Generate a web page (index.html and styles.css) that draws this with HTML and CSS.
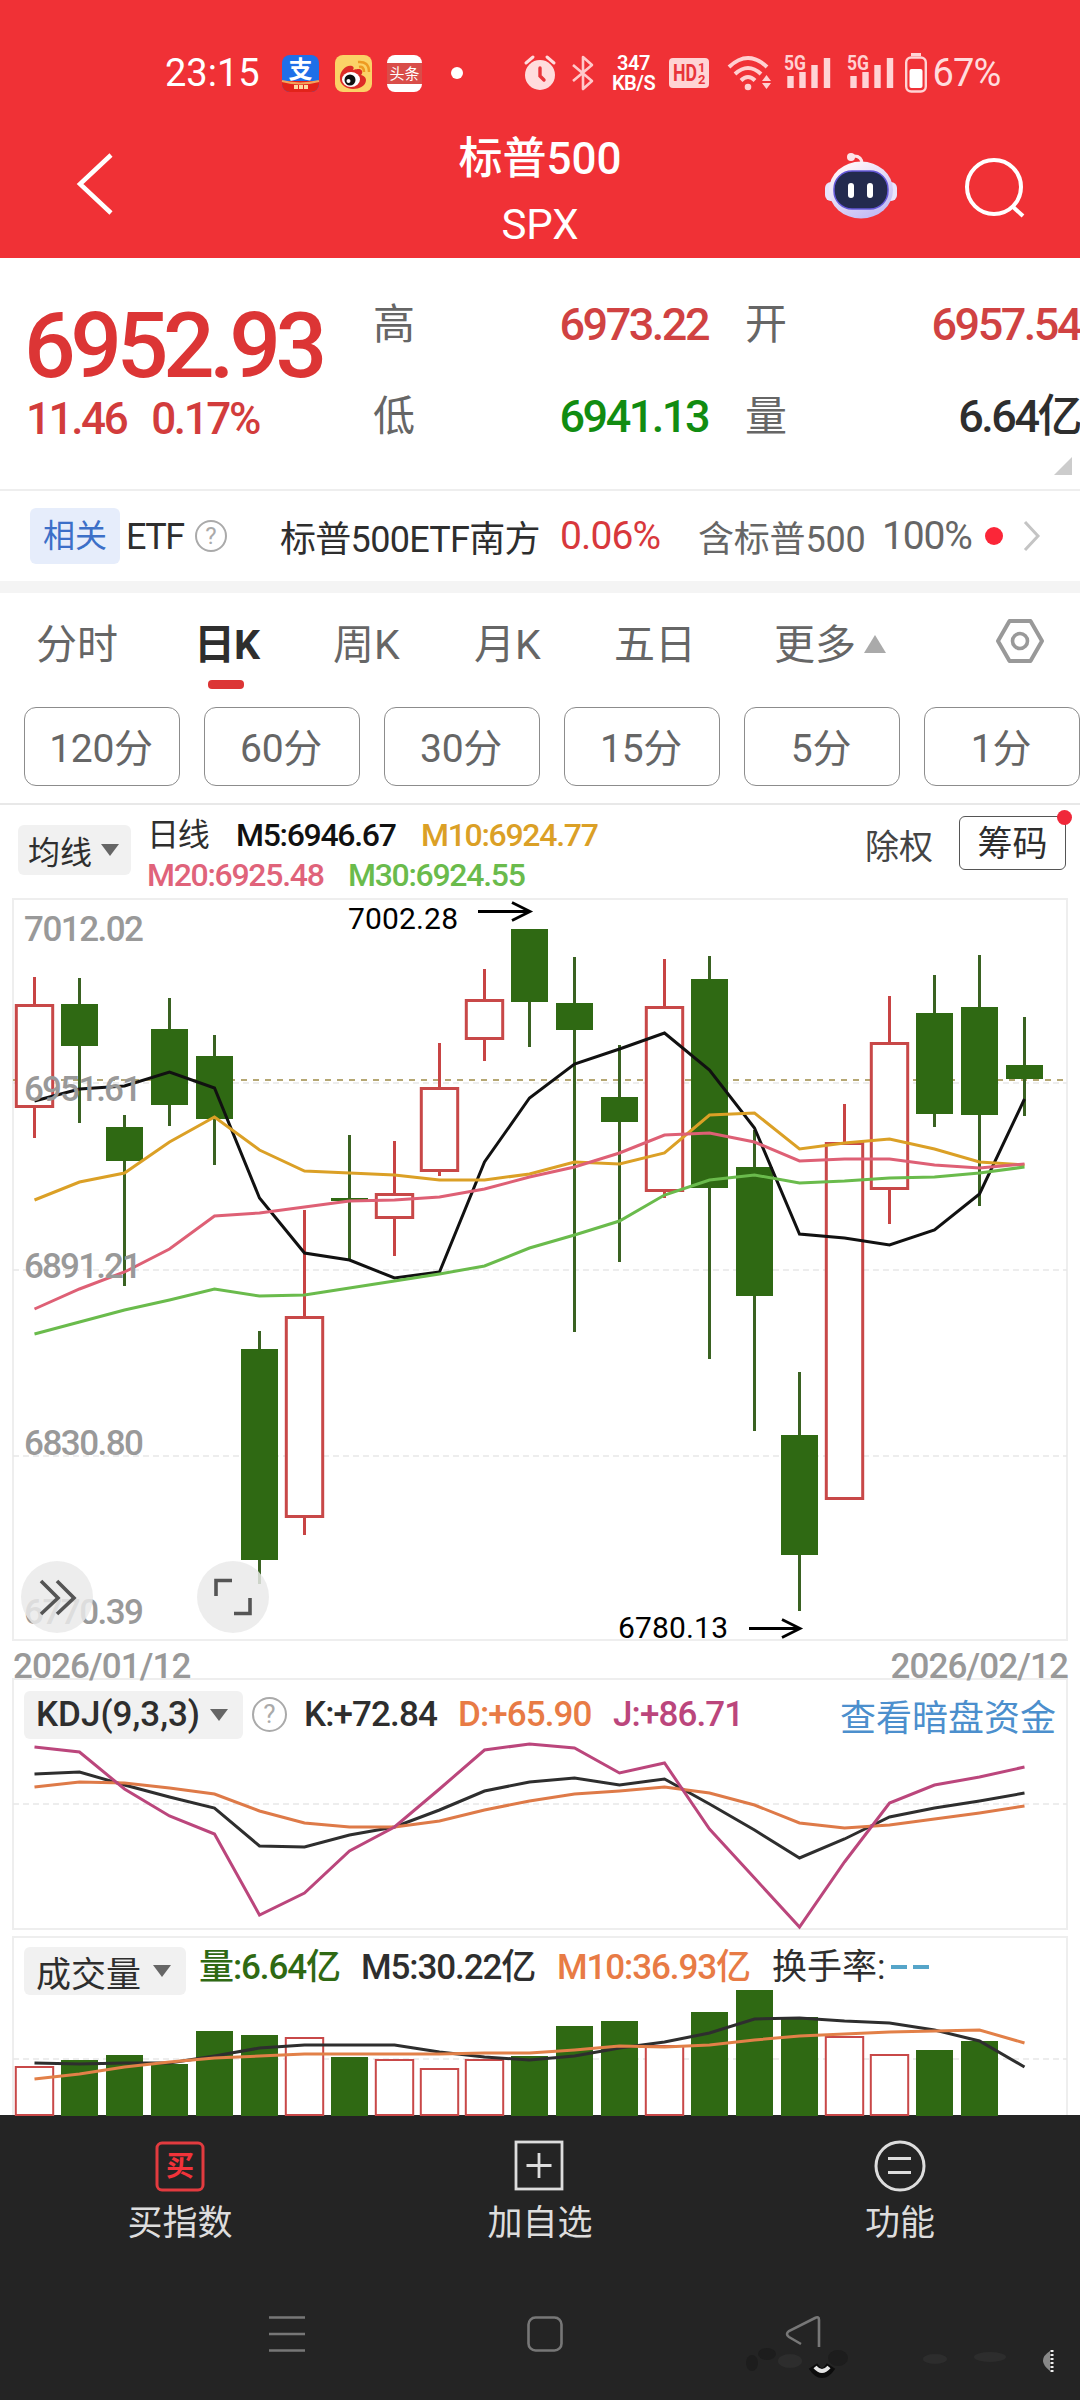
FILE: index.html
```html
<!DOCTYPE html>
<html lang="zh-CN">
<head>
  <meta charset="UTF-8">
  <meta name="viewport" content="width=device-width, initial-scale=1.0">
  <title>标普500 SPX</title>
  <link rel="stylesheet" href="styles.css">
</head>
<body>
  <header class="top">
    <!-- BARRA DE ESTADO -->
    <div class="status">
      <span class="clock">23:15</span>
      <svg class="app-icon" width="37" height="37" viewBox="0 0 37 37">
        <rect width="37" height="37" rx="8" fill="#1f6fe8"/>
        <path d="M0 26h37v3a8 8 0 0 1-8 8H8a8 8 0 0 1-8-8z" fill="#e2231a"/>
        <path d="M0 26q18 5 37 0" stroke="#f3a35c" stroke-width="2" fill="none"/>
        <text x="18.5" y="23" class="cn" font-size="24" font-weight="700" fill="#fff" text-anchor="middle">支</text>
        <path d="M12 32h14" stroke="#ffd9a0" stroke-width="4" stroke-dasharray="4 1"/>
      </svg>
      <svg class="app-icon" width="37" height="37" viewBox="0 0 37 37">
        <rect width="37" height="37" rx="8" fill="#fbd267"/>
        <path d="M5 24C4 16 12 9 17 11c3 1 1 4 1 4s8-3 9 1c1 2-1 4-1 4s5 1 5 5c0 6-7 9-13 9S5 30 5 24z" fill="#dd2b27"/>
        <ellipse cx="16" cy="24.500" rx="9" ry="7.500" fill="#fff"/>
        <circle cx="15" cy="25" r="5.500" fill="#111"/>
        <circle cx="13.500" cy="26" r="2" fill="#fff"/>
        <path d="M24 12q5-1 5 5M23 7q11-1 11 10" stroke="#ee9a22" stroke-width="2.500" fill="none"/>
      </svg>
      <svg class="app-icon" width="35" height="37" viewBox="0 0 35 37">
        <rect width="35" height="37" rx="8" fill="#fff"/>
        <rect y="8" width="35" height="21" fill="#d94d49"/>
        <text x="17.500" y="24" class="cn" font-size="15" fill="#fff" text-anchor="middle">头条</text>
      </svg>
      <i class="dot"></i>
      <svg class="alarm" width="32" height="36" viewBox="0 0 32 36">
        <circle cx="16" cy="20" r="15" fill="#ffdcdd"/>
        <path d="M2 8l7-6M30 8l-7-6" stroke="#ffdcdd" stroke-width="3" stroke-linecap="round"/>
        <path d="M16 13v8l4 4" stroke="#e8343a" stroke-width="3.400" fill="none" stroke-linecap="round"/>
      </svg>
      <svg class="bt" width="22" height="36" viewBox="0 0 22 36">
        <path d="M1 10l19 16-9 8V2l9 8L1 26" stroke="#ffc9ca" stroke-width="2.600" fill="none" stroke-linejoin="round"/>
      </svg>
      <span class="speed">347<br>KB/S</span>
      <svg class="hd" width="40" height="30" viewBox="0 0 40 30">
        <rect width="40" height="30" rx="4" fill="#ffd4d5"/>
        <g fill="#e8343a" font-weight="700">
          <text x="4" y="23" font-size="23" textLength="24" lengthAdjust="spacingAndGlyphs">HD</text>
          <text x="29" y="14" font-size="13">1</text>
          <text x="29" y="26" font-size="13">2</text>
        </g>
      </svg>
      <svg class="wifi" width="44" height="36" viewBox="0 0 44 36">
        <g fill="none" stroke="#ffd0d1" stroke-width="4">
          <path d="M1 12Q20-6 39 12"/>
          <path d="M7 19q13-12 26 0"/>
          <path d="M13 25.500q7-7 14 0"/>
        </g>
        <circle cx="20" cy="32" r="3.300" fill="#ffd0d1"/>
        <path d="M34 26l4.500-6 4.500 6zM34 28l4.500 6 4.500-6z" fill="#ffd0d1"/>
      </svg>
      <svg class="signal" width="47" height="36" viewBox="0 0 47 36">
        <text x="0" y="14.500" font-size="20" font-weight="700" fill="#ffd0d1" textLength="22" lengthAdjust="spacingAndGlyphs">5G</text>
        <path d="M6.500 33V21M18.500 33V17M30.500 33V10M43 33V3" stroke="#ffd4d5" stroke-width="6.400"/>
      </svg>
      <svg class="signal second" width="47" height="36" viewBox="0 0 47 36">
        <text x="0" y="14.500" font-size="20" font-weight="700" fill="#ffd0d1" textLength="22" lengthAdjust="spacingAndGlyphs">5G</text>
        <path d="M6.500 33V21M18.500 33V17M30.500 33V10M43 33V3" stroke="#ffd4d5" stroke-width="6.400"/>
      </svg>
      <svg class="battery" width="22" height="40" viewBox="0 0 22 40">
        <rect x="6" y="0" width="10" height="3" fill="#ffd4d5"/>
        <rect x="1.200" y="4.500" width="19.600" height="34" rx="5" fill="none" stroke="#ffd4d5" stroke-width="2.400"/>
        <rect x="4.500" y="16" width="13" height="19" rx="2" fill="#fff"/>
      </svg>
      <span class="percent">67%</span>
    </div>

    <!-- TÍTULO -->
    <div class="titlebar">
      <svg class="back" width="40" height="64" viewBox="0 0 40 64">
        <path d="M36 3L5 32l31 29" stroke="#fff" stroke-width="4.500" fill="none"/>
      </svg>
      <div class="title">
        <h1>标普500</h1>
        <p>SPX</p>
      </div>
      <svg class="robot" width="72" height="68" viewBox="0 0 72 68">
        <defs>
          <linearGradient id="shell" x1="0" y1="0" x2="0.6" y2="1">
            <stop offset="0.2" stop-color="#fdf3f8"/>
            <stop offset="1" stop-color="#c3bdf5"/>
          </linearGradient>
        </defs>
        <path d="M37 13q0-8-8-8" stroke="#fde4e8" stroke-width="3" fill="none"/>
        <circle cx="26" cy="6" r="4" fill="#fde4e8"/>
        <rect x="0" y="31" width="72" height="19" rx="6" fill="#e8e4fc"/>
        <ellipse cx="36" cy="39" rx="32" ry="28.500" fill="url(#shell)"/>
        <rect x="9" y="20" width="54" height="38" rx="18" fill="#232a4e" stroke="#6458d8" stroke-width="1.500"/>
        <rect x="23" y="32" width="6" height="15" rx="3" fill="#fff"/>
        <rect x="42" y="32" width="6" height="15" rx="3" fill="#fff"/>
      </svg>
      <svg class="search" width="62" height="62" viewBox="0 0 62 62">
        <circle cx="30" cy="30" r="27" stroke="#fff" stroke-width="4" fill="none"/>
        <path d="M48 49l11 10" stroke="#fff" stroke-width="4"/>
      </svg>
    </div>
  </header>

  <!-- COTIZACIÓN -->
  <section class="quote">
    <div class="price">
      <strong>6952.93</strong>
      <p><span>11.46</span><span>0.17%</span></p>
    </div>
    <dl class="stats">
      <dt>高</dt><dd class="up">6973.22</dd>
      <dt>开</dt><dd class="up">6957.54</dd>
      <dt>低</dt><dd class="down">6941.13</dd>
      <dt>量</dt><dd>6.64亿</dd>
    </dl>
    <i class="corner"></i>
  </section>

  <!-- ETF RELACIONADO -->
  <section class="etf">
    <span class="tag">相关</span>
    <span class="etf-word">ETF</span>
    <span class="help">?</span>
    <span class="etf-name">标普500ETF南方</span>
    <span class="etf-change">0.06%</span>
    <span class="etf-holds">含标普500</span>
    <span class="etf-share">100%</span>
    <i class="live"></i>
    <svg class="more" width="18" height="32" viewBox="0 0 18 32">
      <path d="M2 2l13 14L2 30" stroke="#c4c4c4" stroke-width="3" fill="none"/>
    </svg>
  </section>

  <!-- PERIODOS -->
  <nav class="tabs">
    <a>分时</a>
    <a class="active">日K</a>
    <a>周K</a>
    <a>月K</a>
    <a>五日</a>
    <a>更多<i class="tri-up"></i></a>
    <svg class="gear" width="50" height="46" viewBox="0 0 50 46">
      <path d="M14.500 3h21L47 23 35.500 43h-21L3 23z" stroke="#999" stroke-width="4" fill="none" stroke-linejoin="round"/>
      <circle cx="25" cy="23" r="7.500" stroke="#999" stroke-width="3.600" fill="none"/>
    </svg>
  </nav>
  <div class="minutes">
    <button>120分</button>
    <button>60分</button>
    <button>30分</button>
    <button>15分</button>
    <button>5分</button>
    <button>1分</button>
  </div>

  <!-- MEDIAS MÓVILES -->
  <section class="legend">
    <span class="chip">均线<i class="tri-down"></i></span>
    <div class="averages">
      <p><b>日线</b><span class="m5">M5:6946.67</span><span class="m10">M10:6924.77</span></p>
      <p><span class="m20">M20:6925.48</span><span class="m30">M30:6924.55</span></p>
    </div>
    <span class="rights">除权</span>
    <span class="chips-button">筹码</span>
  </section>

  <section class="candles">
    <svg id="kline" width="1080" height="743" viewBox="0 898 1080 743">
      <rect x="13" y="899" width="1054" height="741" class="frame"/>
      <path d="M13 1083H1067M13 1270H1067M13 1456H1067" class="grid"/>
      <path d="M13 1080H1067" class="last-price"/>
      <g id="candle-layer"></g>
      <g id="ma-layer"></g>
      <g class="axis">
        <text x="24" y="941" textLength="120">7012.02</text>
        <text x="24" y="1101" textLength="118">6951.61</text>
        <text x="24" y="1278" textLength="118">6891.21</text>
        <text x="24" y="1455" textLength="120">6830.80</text>
        <text x="24" y="1624" textLength="120">6770.39</text>
      </g>
      <g class="extreme">
        <text x="348" y="929" textLength="110">7002.28</text>
        <path d="M478 911.500h51M512 902.500l18 9-18 9"/>
        <text x="618" y="1638" textLength="110">6780.13</text>
        <path d="M749 1628.500h50M782 1619.500l18 9-18 9"/>
      </g>
      <g class="round">
        <circle cx="57" cy="1597" r="36"/>
        <path d="M41 1581l17 17-17 16M57 1581l17 17-17 16"/>
        <circle cx="233" cy="1597" r="36"/>
        <path d="M216 1596v-15.500h16M234 1613.500h16V1598"/>
      </g>
    </svg>
  </section>

  <div class="dates"><span>2026/01/12</span><span>2026/02/12</span></div>

  <!-- KDJ -->
  <section class="panel kdj">
    <div class="panel-head">
      <span class="chip">KDJ(9,3,3)<i class="tri-down"></i></span>
      <span class="help">?</span>
      <span class="k">K:+72.84</span>
      <span class="d">D:+65.90</span>
      <span class="j">J:+86.71</span>
      <a class="dark-pool">查看暗盘资金</a>
    </div>
    <svg id="kdj" width="1080" height="190" viewBox="0 1740 1080 190">
      <path d="M13 1804H1067" class="grid"/>
    </svg>
  </section>

  <!-- VOLUMEN -->
  <section class="panel volume">
    <div class="panel-head">
      <span class="chip">成交量<i class="tri-down"></i></span>
      <span class="vol">量:6.64亿</span>
      <span class="v5">M5:30.22亿</span>
      <span class="v10">M10:36.93亿</span>
      <span class="turnover">换手率:</span>
      <i class="dashes"></i>
    </div>
    <svg id="volume" width="1080" height="127" viewBox="0 1988 1080 127">
      <path d="M13 2059H1067" class="grid"/>
    </svg>
  </section>

  <!-- BARRA INFERIOR -->
  <footer class="bottom">
    <div class="actions">
      <a>
        <svg width="52" height="52" viewBox="0 0 52 52">
          <rect x="3" y="3" width="46" height="47" rx="5" fill="none" stroke="#e23b3f" stroke-width="3"/>
          <text x="26" y="36" class="cn" font-size="28" font-weight="700" fill="#f2333a" text-anchor="middle">买</text>
        </svg>
        买指数
      </a>
      <a>
        <svg width="52" height="52" viewBox="0 0 52 52">
          <rect x="2" y="2" width="46" height="47" fill="none" stroke="#ddd" stroke-width="2.800"/>
          <path d="M25 13v25M12.500 25.500h25" stroke="#ddd" stroke-width="2.800"/>
        </svg>
        加自选
      </a>
      <a>
        <svg width="52" height="52" viewBox="0 0 52 52">
          <circle cx="26" cy="26" r="24" fill="none" stroke="#ddd" stroke-width="3"/>
          <path d="M14 18.500h23M14 32.500h23" stroke="#ddd" stroke-width="3"/>
        </svg>
        功能
      </a>
    </div>
    <svg class="system" width="1080" height="100" viewBox="0 2300 1080 100">
      <g fill="none" stroke="#777" stroke-width="2.600">
        <path d="M269 2317.500h36M269 2334h36M269 2350.500h36"/>
        <rect x="528.500" y="2317.500" width="33" height="33" rx="7"/>
        <path d="M819 2347v-27q0-4-4-2l-26 13q-4 3 0 6l12 7"/>
      </g>
      <g fill="#1d1d1d">
        <ellipse cx="767" cy="2354" rx="9" ry="6"/>
        <ellipse cx="752" cy="2363" rx="6" ry="8"/>
        <ellipse cx="838" cy="2358" rx="10" ry="8"/>
      </g>
      <g fill="#2d2d2d">
        <ellipse cx="790" cy="2361" rx="12" ry="7"/>
        <ellipse cx="935" cy="2359" rx="12" ry="5"/>
        <ellipse cx="990" cy="2357" rx="16" ry="5"/>
      </g>
      <path d="M813 2366q9 14 18 0" stroke="#0c0c0c" stroke-width="10" fill="none"/>
      <path d="M815 2367q7 8 14 0" stroke="#e4e4e4" stroke-width="4" fill="none"/>
      <path d="M1050 2351q-14 9 0 20z" fill="#888"/>
      <path d="M1052 2350v22" stroke="#eee" stroke-width="3" stroke-dasharray="2 2"/>
    </svg>
  </footer>
  <script src="script.js"></script>
</body>
</html>
```

FILE: styles.css
```css
body {
  margin: 0;
  width: 1080px;
  height: 2400px;
  overflow: hidden;
  background-color: #fff;
  color: #2e2e2e;
  font-family: Roboto, "Noto Sans CJK SC", sans-serif;
}

h1, p, dl, dd {
  margin: 0;
  font-weight: 400;
}

svg {
  display: block;
  flex: none;
  overflow: visible;
}

span, a, dd, dt, b {
  white-space: nowrap;
}

.cn {
  font-family: "Noto Sans CJK SC", sans-serif;
}

/* cabecera */
.top {
  height: 258px;
  background-color: #f03136;
  color: #fff;
}

.status {
  display: flex;
  align-items: center;
  height: 76px;
  padding: 35px 0 0 165px;
}

.clock {
  width: 117px;
  font-size: 38px;
}

.app-icon {
  margin-right: 15.5px;
}

.dot {
  width: 12px;
  height: 12px;
  margin-left: 13px;
  border-radius: 50%;
  background-color: #fff;
}

.alarm { margin-left: 61px; }
.bt { margin-left: 16px; }

.speed {
  width: 44px;
  margin-left: 18px;
  font-size: 20px;
  line-height: 20px;
  font-weight: 600;
  text-align: center;
  letter-spacing: -0.5px;
}

.hd { margin-left: 13px; }
.wifi { margin-left: 19px; }
.signal { margin-left: 12px; }
.signal.second { margin-left: 16px; }
.battery { margin-left: 11px; }

.percent {
  margin-left: 6px;
  font-size: 38px;
  color: #ffdcdd;
  letter-spacing: -0.8px;
}

.titlebar {
  display: flex;
  align-items: flex-start;
  height: 147px;
}

.back {
  margin: 41px 0 0 75px;
}

.title {
  width: 200px;
  margin-left: 325px;
  padding-top: 16px;
  text-align: center;
}

.title h1 {
  font-size: 44px;
  line-height: 65px;
  font-weight: 500;
}

.title p {
  font-size: 42px;
  line-height: 65px;
}

.robot { margin: 40px 0 0 185px; }
.search { margin: 46px 0 0 67px; }

/* cotización */
.quote {
  display: flex;
  position: relative;
  height: 231px;
  border-bottom: 2px solid #eee;
}

.price {
  width: 373px;
  padding: 38px 0 0 24px;
  box-sizing: border-box;
  color: #dc3535;
}

.price strong {
  display: block;
  font-size: 91px;
  line-height: 100px;
  font-weight: 500;
  letter-spacing: -5.4px;
}

.price p {
  display: flex;
  gap: 25px;
  margin-left: 2px;
  font-size: 44px;
  line-height: 46px;
  font-weight: 500;
  letter-spacing: -2.4px;
  color: #d23c3c;
}

.stats {
  display: grid;
  grid-template-columns: 168px 167px 203px 169px;
  grid-template-rows: 92px 92px;
  padding-top: 21px;
  line-height: 92px;
}

.stats dt {
  font-size: 42px;
  color: #666;
}

.stats dd {
  font-size: 45px;
  font-weight: 500;
  text-align: right;
  letter-spacing: -2.5px;
}

.stats dt:nth-of-type(even) {
  padding-left: 37px;
}

.stats .up { color: #d04242; }
.stats .down { color: #118c11; }

.corner {
  position: absolute;
  right: 8px;
  bottom: 14px;
  border-left: 18px solid transparent;
  border-bottom: 18px solid #ccc;
}

/* etf */
.etf {
  display: flex;
  align-items: center;
  height: 90px;
  padding-left: 30px;
  border-bottom: 12px solid #f4f4f4;
  font-size: 36px;
}

.tag {
  width: 90px;
  height: 56px;
  border-radius: 6px;
  background-color: #e6edfb;
  color: #3c6fc8;
  font-size: 32px;
  line-height: 57px;
  text-align: center;
}

.etf-word {
  width: 69px;
  margin-left: 6px;
  padding-top: 2px;
  letter-spacing: -1.5px;
}

.help {
  width: 28px;
  height: 28px;
  border: 2px solid #aaa;
  border-radius: 50%;
  color: #aaa;
  font-size: 24px;
  line-height: 28px;
  text-align: center;
}

.etf-name {
  width: 280px;
  margin-left: 53px;
  letter-spacing: -0.7px;
}

.etf-change {
  width: 138px;
  font-size: 39px;
  letter-spacing: -0.9px;
  color: #d8383c;
}

.etf-holds {
  width: 184px;
  color: #666;
  letter-spacing: -0.2px;
}

.etf-share {
  width: 103px;
  font-size: 39px;
  letter-spacing: -1.2px;
  color: #666;
}

.live {
  width: 18px;
  height: 18px;
  border-radius: 50%;
  background-color: #fb2638;
}

.more { margin-left: 20px; }

/* periodos */
.tabs {
  display: grid;
  grid-template-columns: 161px 136px 141px 140px 160px 221px 50px;
  align-items: center;
  height: 96px;
  margin-bottom: 4px;
  padding-left: 36px;
  font-size: 41px;
  color: #666;
}

.tabs .active {
  position: relative;
  width: 64px;
  margin-left: -3px;
  color: #2e2e2e;
  font-weight: 700;
  letter-spacing: -1px;
}

.tabs .active::after {
  content: "";
  position: absolute;
  left: 14px;
  bottom: -18px;
  width: 36px;
  height: 9px;
  border-radius: 4px;
  background-color: #dc3535;
}

.tri-up, .tri-down {
  display: inline-block;
  border: 11px solid transparent;
}

.tri-up {
  margin: 0 0 6px 8px;
  border-top: 0;
  border-bottom: 18px solid #aaa;
}

.tri-down {
  border-width: 12px 9px 0;
  border-top-color: #666;
}

.minutes {
  display: flex;
  gap: 24px;
  height: 96px;
  padding: 14px 0 0 24px;
  border-bottom: 2px solid #e8e8e8;
}

.minutes button {
  flex: none;
  box-sizing: border-box;
  width: 156px;
  height: 79px;
  padding: 0 2px 3px 0;
  border: 1.5px solid #8c8c8c;
  border-radius: 12px;
  background-color: #fff;
  color: #666;
  font-family: inherit;
  font-size: 39px;
  letter-spacing: -0.3px;
}

/* medias */
.legend {
  display: flex;
  align-items: flex-start;
  height: 93px;
}

.chip {
  display: flex;
  align-items: center;
  justify-content: space-between;
  box-sizing: border-box;
  border-radius: 6px;
  background-color: #f1f1f1;
}

.legend .chip {
  width: 113px;
  height: 50px;
  margin: 20px 0 0 18px;
  padding: 0 12px 0 10px;
  font-size: 32px;
}

.averages {
  width: 718px;
  margin: 10px 0 0 16px;
  font-size: 32px;
  font-weight: 500;
  letter-spacing: -1.3px;
}

.averages p {
  display: flex;
  height: 40px;
  font-weight: 500;
  line-height: 40px;
}

.averages b {
  width: 89px;
  font-weight: 400;
}

.m5 {
  width: 185px;
  color: #111;
}

.m10 { color: #dba026; }

.m20 {
  width: 201px;
  color: #e0637a;
}

.m30 { color: #6abb4c; }

.rights {
  width: 94px;
  margin-top: 17px;
  font-size: 34px;
  line-height: 50px;
  color: #444;
}

.chips-button {
  position: relative;
  width: 105px;
  height: 52px;
  margin-top: 11px;
  border: 1.5px solid #555;
  border-radius: 6px;
  font-size: 35px;
  line-height: 56px;
  text-align: center;
}

.chips-button::after {
  content: "";
  position: absolute;
  right: -7px;
  top: -7px;
  width: 15px;
  height: 15px;
  border-radius: 50%;
  background-color: #f0283a;
}

/* gráficos */
.candles {
  height: 743px;
}

.frame {
  fill: none;
  stroke: #eee;
  stroke-width: 2;
}

.grid {
  stroke: #e8e8e8;
  stroke-width: 1.5;
  stroke-dasharray: 6 4;
}

.last-price {
  stroke: #b5a773;
  stroke-width: 2;
  stroke-dasharray: 6 6;
}

.axis {
  fill: #999;
  font-size: 35px;
  font-weight: 500;
}

.extreme text {
  fill: #000;
  font-size: 30px;
}

.extreme path {
  fill: none;
  stroke: #000;
  stroke-width: 2.8;
}

.round circle {
  fill: #eaeaea;
  fill-opacity: 0.84;
}

.round path {
  fill: none;
  stroke: #555;
  stroke-width: 3.6;
}

.dates {
  display: flex;
  justify-content: space-between;
  height: 37px;
  padding: 0 12px 0 13px;
  color: #999;
  font-size: 35px;
  font-weight: 500;
  line-height: 52px;
  letter-spacing: -0.9px;
}

.panel {
  box-sizing: border-box;
  margin-left: 12px;
  width: 1056px;
  border: 2px solid #eee;
}

.panel svg {
  margin-left: -14px;
}

.panel-head {
  display: flex;
  align-items: center;
  box-sizing: border-box;
  font-size: 35px;
}

.kdj {
  height: 252px;
  margin-bottom: 6px;
}

.kdj .panel-head {
  height: 60px;
  padding: 9px 0 0 10px;
}

.kdj .chip {
  width: 219px;
  height: 48px;
  padding: 0 15px 0 12px;
  font-weight: 500;
}

.kdj .help {
  width: 31px;
  height: 31px;
  margin: 0 17px 0 9px;
  font-size: 26px;
  line-height: 31px;
}

.k, .d, .j {
  font-weight: 500;
  letter-spacing: -0.9px;
}

.k { width: 154px; }
.d { width: 155px; color: #e87b45; }
.j { width: 227px; color: #bb467c; }

.dark-pool {
  font-size: 36px;
  color: #4c8fcd;
}

.volume {
  height: 179px;
  border-bottom: 0;
}

.volume .panel-head {
  height: 50px;
  padding-left: 10px;
  align-items: flex-start;
}

.volume .chip {
  width: 162px;
  height: 48px;
  margin: 9px 13px 0 0;
  padding: 0 15px 0 12px;
}

.volume .panel-head > span:not(.chip) {
  line-height: 60px;
}

.vol, .v5, .v10 {
  font-weight: 500;
  letter-spacing: -1.1px;
}

.vol { width: 162px; color: #2f6913; }
.v5 { width: 196px; }
.v10 { width: 215px; color: #e87b45; }
.turnover { width: 119px; }

.dashes {
  width: 38px;
  height: 4px;
  margin-top: 27px;
  background: linear-gradient(90deg, #56a5c9 42%, transparent 42% 58%, #56a5c9 58%);
}

.bar-down {
  fill: #2f6913;
}

.bar-up {
  fill: #fff;
  stroke: #c84848;
}

.wick {
  stroke-width: 3;
}

.line {
  fill: none;
  stroke-width: 3;
}

/* barra inferior */
.bottom {
  height: 285px;
  background-color: #242424;
}

.actions {
  display: grid;
  grid-template-columns: repeat(3, 360px);
  height: 185px;
}

.actions a {
  display: flex;
  flex-direction: column;
  align-items: center;
  padding-top: 25px;
  color: #ddd;
  font-size: 35px;
  line-height: 64px;
}
```

FILE: script.js
```js
const NS = 'http://www.w3.org/2000/svg';
const START = 34.5;
const STEP = 45;

// tipo, máximo, cuerpo arriba, cuerpo abajo, mínimo
const candles = [
  ['up', 977, 1004, 1108, 1138],
  ['down', 978, 1004, 1046, 1123],
  ['down', 1115, 1127, 1161, 1286],
  ['down', 998, 1029, 1105, 1126],
  ['down', 1035, 1056, 1119, 1165],
  ['down', 1331, 1349, 1560, 1584],
  ['up', 1210, 1316, 1518, 1535],
  ['down', 1135, 1198, 1201, 1260],
  ['up', 1141, 1193, 1219, 1256],
  ['up', 1043, 1087, 1172, 1176],
  ['up', 969, 999, 1040, 1061],
  ['down', 929, 929, 1002, 1047],
  ['down', 957, 1003, 1030, 1332],
  ['down', 1045, 1097, 1122, 1262],
  ['up', 959, 1006, 1192, 1198],
  ['down', 956, 979, 1188, 1359],
  ['down', 1130, 1167, 1296, 1431],
  ['down', 1372, 1435, 1555, 1611],
  ['up', 1104, 1142, 1500, 1500],
  ['up', 996, 1042, 1190, 1224],
  ['down', 975, 1013, 1114, 1127],
  ['down', 955, 1007, 1115, 1206],
  ['down', 1017, 1065, 1079, 1116]
];

const averages = {
  '#111111': [1101, 1089, 1086, 1072, 1088, 1198, 1253, 1260, 1278, 1272, 1162, 1098, 1064, 1049, 1033, 1070, 1128, 1234, 1238, 1245, 1230, 1194, 1099],
  '#dba026': [1200, 1182, 1173, 1142, 1117, 1150, 1171, 1173, 1175, 1180, 1180, 1174, 1162, 1164, 1153, 1115, 1113, 1149, 1143, 1139, 1149, 1162, 1165],
  '#de6075': [1309, 1289, 1272, 1249, 1216, 1213, 1207, 1201, 1200, 1197, 1189, 1177, 1167, 1153, 1135, 1133, 1142, 1161, 1159, 1159, 1165, 1168, 1164],
  '#6abb4c': [1334, 1322, 1310, 1300, 1289, 1296, 1295, 1288, 1281, 1274, 1266, 1248, 1235, 1221, 1195, 1180, 1175, 1183, 1181, 1178, 1177, 1173, 1167]
};

const kdjLines = {
  '#2e2e2e': [1774, 1772, 1785, 1797, 1808, 1846, 1847, 1835, 1827, 1810, 1791, 1782, 1778, 1785, 1779, 1804, 1830, 1858, 1839, 1817, 1808, 1801, 1793],
  '#de7a48': [1787, 1782, 1783, 1788, 1794, 1811, 1823, 1827, 1827, 1821, 1810, 1801, 1794, 1791, 1787, 1793, 1805, 1823, 1828, 1825, 1819, 1813, 1806],
  '#bb467c': [1747, 1752, 1789, 1816, 1834, 1915, 1893, 1851, 1827, 1789, 1750, 1744, 1748, 1773, 1763, 1829, 1878, 1927, 1862, 1803, 1785, 1777, 1767]
};

const volumes = [2066, 2060, 2055, 2064, 2031, 2035, 2037, 2057, 2059, 2068, 2059, 2056, 2026, 2021, 2045, 2012, 1990, 2017, 2036, 2054, 2050, 2041];

const volumeLines = {
  '#2e2e2e': [2063, 2064, 2063, 2063, 2056, 2048, 2045, 2045, 2045, 2052, 2057, 2060, 2056, 2048, 2042, 2033, 2019, 2018, 2021, 2023, 2030, 2041, 2067],
  '#e28048': [2079, 2074, 2067, 2062, 2058, 2056, 2054, 2054, 2054, 2054, 2053, 2053, 2050, 2046, 2047, 2045, 2040, 2036, 2034, 2032, 2031, 2030, 2043]
};

function add(parent, tag, attrs) {
  const el = document.createElementNS(NS, tag);
  for (const key in attrs) el.setAttribute(key, attrs[key]);
  parent.appendChild(el);
}

function drawLines(parent, lines) {
  for (const color in lines) {
    const points = lines[color].map((y, i) => (START + STEP * i) + ',' + y).join(' ');
    add(parent, 'polyline', { points: points, stroke: color, class: 'line' });
  }
}

function drawBar(parent, type, x, top, bottom, stroke) {
  if (type === 'up') {
    add(parent, 'rect', { x: x - 19.7 + stroke / 2, y: top + stroke / 2, width: 39.4 - stroke, height: bottom - top - stroke, 'stroke-width': stroke, class: 'bar-up' });
  } else {
    add(parent, 'rect', { x: x - 18.5, y: top, width: 37, height: bottom - top, class: 'bar-down' });
  }
}

// Velas
const candleLayer = document.getElementById('candle-layer');
candles.forEach(([type, high, top, bottom, low], i) => {
  const x = START + STEP * i;
  add(candleLayer, 'path', { d: `M${x} ${high}V${low}`, stroke: type === 'up' ? '#c84444' : '#3a6222', class: 'wick' });
  drawBar(candleLayer, type, x, top, bottom, 3);
});
drawLines(document.getElementById('ma-layer'), averages);

// KDJ
drawLines(document.getElementById('kdj'), kdjLines);

// Volumen
const volume = document.getElementById('volume');
volumes.forEach((top, i) => drawBar(volume, candles[i][0], START + STEP * i, top, 2116, 2));
drawLines(volume, volumeLines);
```
